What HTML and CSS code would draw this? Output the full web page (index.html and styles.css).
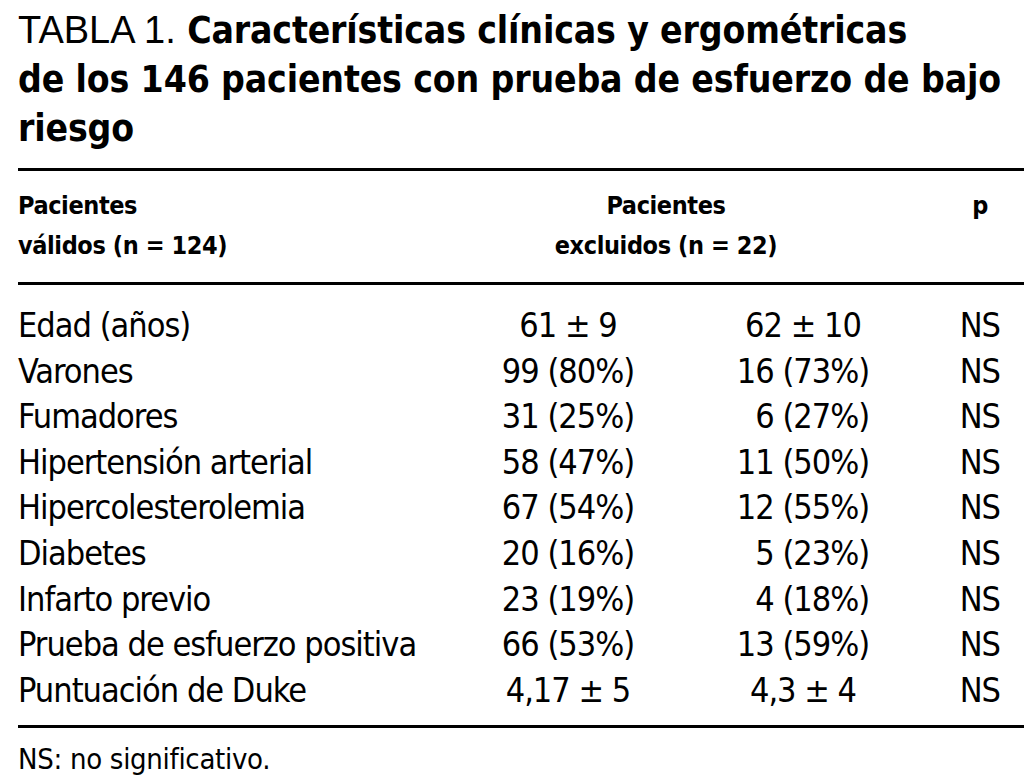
FILE: index.html
```html
<!DOCTYPE html>
<html lang="es">
<head>
<meta charset="utf-8">
<title>Tabla 1</title>
<link rel="stylesheet" href="styles.css">
</head>
<body>
<div class="page">
  <h1 class="title"><span class="label">TABLA 1.</span> Características clínicas y ergométricas<br>de los 146 pacientes con prueba de esfuerzo de bajo<br>riesgo</h1>
  <div class="head">
    <div class="h1c">Pacientes<br>válidos (n = 124)</div>
    <div class="h2c">Pacientes<br>excluidos (n = 22)</div>
    <div class="h3c">p</div>
  </div>
  <div class="body">
    <div class="row"><span class="c1">Edad (años)</span><span class="c2">61 ± 9</span><span class="c3">62 ± 10</span><span class="c4">NS</span></div>
    <div class="row"><span class="c1">Varones</span><span class="c2">99 (80%)</span><span class="c3">16 (73%)</span><span class="c4">NS</span></div>
    <div class="row"><span class="c1">Fumadores</span><span class="c2">31 (25%)</span><span class="c3">&#8199;6 (27%)</span><span class="c4">NS</span></div>
    <div class="row"><span class="c1">Hipertensión arterial</span><span class="c2">58 (47%)</span><span class="c3">11 (50%)</span><span class="c4">NS</span></div>
    <div class="row"><span class="c1">Hipercolesterolemia</span><span class="c2">67 (54%)</span><span class="c3">12 (55%)</span><span class="c4">NS</span></div>
    <div class="row"><span class="c1">Diabetes</span><span class="c2">20 (16%)</span><span class="c3">&#8199;5 (23%)</span><span class="c4">NS</span></div>
    <div class="row"><span class="c1">Infarto previo</span><span class="c2">23 (19%)</span><span class="c3">&#8199;4 (18%)</span><span class="c4">NS</span></div>
    <div class="row"><span class="c1">Prueba de esfuerzo positiva</span><span class="c2">66 (53%)</span><span class="c3">13 (59%)</span><span class="c4">NS</span></div>
    <div class="row"><span class="c1">Puntuación de Duke</span><span class="c2">4,17 ± 5</span><span class="c3">4,3 ± 4</span><span class="c4">NS</span></div>
  </div>
  <p class="note">NS: no significativo.</p>
</div>
</body>
</html>
```
FILE: styles.css
```css
html, body {
  margin: 0;
  padding: 0;
  background: #fff;
  color: #000;
}
.page {
  padding: 6px 0 0 18px;
  font-family: "Liberation Sans Narrow", "Arial Narrow", "DejaVu Sans Condensed", "Liberation Sans", sans-serif;
}
.title {
  margin: 0;
  font-size: 37px;
  letter-spacing: -0.15px;
  line-height: 49px;
  font-weight: bold;
  padding-bottom: 15px;
  border-bottom: 3px solid #000;
}
.title .label {
  font-family: "Liberation Sans", Arial, sans-serif;
  font-weight: normal;
  font-size: 38px;
  letter-spacing: 0;
}
.head {
  display: grid;
  grid-template-columns: 498px 300px 1fr;
  font-weight: bold;
  font-size: 25px;
  letter-spacing: -0.4px;
  line-height: 40px;
  padding: 15px 0 16px;
  border-bottom: 3px solid #000;
}
.h2c {
  text-align: center;
}
.h3c {
  text-align: right;
  padding-right: 36px;
}
.body {
  padding: 18px 0 12px;
  border-bottom: 3px solid #000;
}
.row {
  display: grid;
  grid-template-columns: 440px 220px 250px 1fr;
  font-size: 34px;
  letter-spacing: -1px;
  line-height: 45.6px;
}
.c2, .c3 {
  text-align: center;
}
.c4 {
  text-align: right;
  padding-right: 24px;
}
.note {
  margin: 0;
  padding-top: 14px;
  font-size: 29px;
  letter-spacing: -0.3px;
  line-height: 34px;
}
```
